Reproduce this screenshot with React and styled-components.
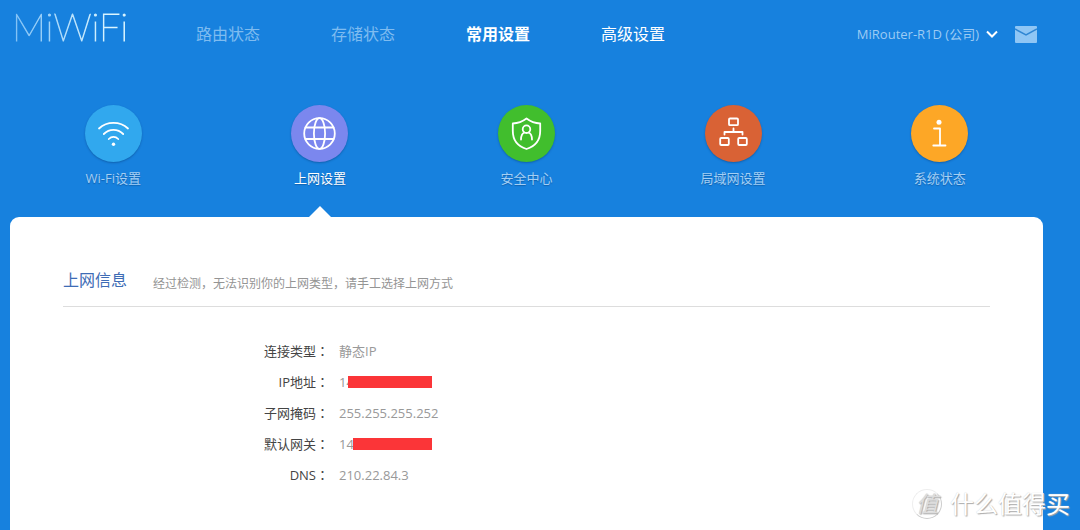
import { useState } from 'react';
import styled, { createGlobalStyle } from 'styled-components';

const GlobalStyle = createGlobalStyle`
  * {
    box-sizing: border-box;
  }
  body {
    margin: 0;
    background: #1781de;
    font-family: 'Open Sans', 'Noto Sans CJK SC', sans-serif;
    font-size: 13px;
    line-height: 20px;
  }
`;

const SPage = styled.div`
  position: relative;
  min-height: 100vh;
  display: flex;
  flex-direction: column;
  overflow: hidden;
`;

const SHeader = styled.header`
  display: flex;
  align-items: center;
  height: 68px;
  padding: 0 43px 0 12px;
`;

const SLogo = styled.a`
  width: 184px;
  padding-bottom: 16px;
  font-family: Lato, sans-serif;
  font-size: 38px;
  font-weight: 100;
  line-height: 40px;
  text-decoration: none;
  color: transparent;
  -webkit-text-stroke: 1px transparent;
  background: linear-gradient(90deg, #7fc0f5 0, #dcf6ff 100px);
  background-clip: text;
`;

const SNav = styled.nav`
  flex: 1;
  display: flex;
  gap: 71px;
`;

const NavLink = styled.a`
  font-size: 16px;
  line-height: 24px;
  text-decoration: none;
  color: ${({ $dim }) => ($dim ? '#7fbcf0' : '#ffffff')};
  font-weight: ${({ $active }) => ($active ? 700 : 400)};
`;

const RouterButton = styled.button`
  display: flex;
  align-items: center;
  gap: 7px;
  padding: 0;
  border: 0;
  background: none;
  color: #9ccbf4;
  font: inherit;
  cursor: pointer;
`;

const MailLink = styled.a`
  display: flex;
  margin-left: 17px;
`;

const STabs = styled.nav`
  display: flex;
  height: 149px;
  padding: 37px 37px 0 10px;
`;

const Tab = styled.button`
  position: relative;
  flex: 1;
  display: flex;
  flex-direction: column;
  align-items: center;
  gap: 6px;
  padding: 0;
  border: 0;
  background: none;
  font: inherit;
  color: ${({ $active }) => ($active ? '#ffffff' : '#a3cff5')};
  text-shadow: 0 1px 1px rgba(0, 40, 90, 0.35);
  cursor: pointer;
  &::after {
    content: '';
    display: ${({ $active }) => ($active ? 'block' : 'none')};
    position: absolute;
    bottom: 0;
    border: 11px solid transparent;
    border-top-width: 0;
    border-bottom-color: #ffffff;
  }
`;

const Circle = styled.span`
  display: flex;
  width: 57px;
  height: 57px;
  border-radius: 50%;
  background: ${({ $color }) => $color};
  box-shadow: 0 1px 2px rgba(0, 40, 90, 0.35);
  svg {
    width: 100%;
    height: 100%;
    fill: none;
    stroke: #ffffff;
    stroke-width: 1.8;
    stroke-linecap: round;
    stroke-linejoin: round;
  }
`;

const SPanel = styled.main`
  flex: 1;
  margin: 0 37px 0 10px;
  padding: 51px 53px 40px;
  border-radius: 9px 9px 0 0;
  background: #ffffff;
`;

const PanelHead = styled.div`
  display: flex;
  align-items: flex-end;
  gap: 26px;
  padding-bottom: 14px;
  border-bottom: 1px solid #dddddd;
  h2 {
    margin: 0;
    font-size: 16px;
    font-weight: 400;
    line-height: 24px;
    color: #3e6cb5;
  }
  p {
    margin: 0;
    font-size: 12px;
    line-height: 16px;
    color: #949494;
  }
`;

const InfoList = styled.dl`
  display: grid;
  grid-template-columns: 266px 1fr;
  column-gap: 10px;
  row-gap: 11px;
  margin: 34px 0 0;
  dt {
    text-align: right;
    color: #444444;
  }
  dd {
    display: flex;
    align-items: center;
    margin: 0;
    color: #999999;
  }
`;

const Colon = styled.span`
  font-family: 'Noto Sans CJK TC', sans-serif;
`;

const Mask = styled.span`
  width: ${({ $wide }) => ($wide ? 84 : 79)}px;
  height: 12px;
  margin-left: ${({ $wide }) => ($wide ? -6 : -1)}px;
  background: #fb3538;
`;

const SWatermark = styled.div`
  position: absolute;
  right: 10px;
  bottom: 10px;
  display: flex;
  align-items: center;
  gap: 8px;
  color: #ffffff;
  font-size: 24px;
  line-height: 32px;
  text-shadow: 1px 1px 1px #aaaaaa, 0 0 1px #cccccc;
`;

const Seal = styled.span`
  width: 30px;
  height: 30px;
  border: 1px solid #eeeeee;
  border-right-color: #cccccc;
  border-bottom-color: #cccccc;
  border-radius: 50%;
  color: #dddddd;
  font-size: 22px;
  font-style: italic;
  line-height: 26px;
  text-align: center;
`;

const navItems = [
  { name: '路由状态', dim: true },
  { name: '存储状态', dim: true },
  { name: '常用设置', active: true },
  { name: '高级设置' },
];

const tabs = [
  {
    name: 'Wi-Fi设置',
    color: '#31a8ee',
    icon: (
      <>
        <path d="M14 23.500C22 16 35 16 43 23.500M18.800 29C24.300 23.500 32.700 23.500 38.200 29M23.800 34C26.500 31.200 30.500 31.200 33.200 34" />
        <circle cx="28.500" cy="39.300" r="1.700" fill="#fff" stroke="none" />
      </>
    ),
  },
  {
    name: '上网设置',
    color: '#7b87ee',
    icon: (
      <>
        <circle cx="28.500" cy="28.500" r="15.300" />
        <ellipse cx="28.500" cy="28.500" rx="5.600" ry="15.300" />
        <path d="M14.500 22.500H42.500M14.500 34H42.500" />
      </>
    ),
  },
  {
    name: '安全中心',
    color: '#41be2d',
    icon: (
      <>
        <path d="M28.500 13.500C24.500 16.500 19.500 18.200 14.800 18.500V26C14.800 34.500 19 41 28.500 44C38 41 42.200 34.500 42.200 26V18.500C37.500 18.200 32.500 16.500 28.500 13.500Z" />
        <circle cx="28.500" cy="24.200" r="3.800" />
        <path d="M23 34.500C23 30.500 24.500 28.300 26.500 27.500M34 34.500C34 30.500 32.500 28.300 30.500 27.500" />
      </>
    ),
  },
  {
    name: '局域网设置',
    color: '#d96235',
    icon: (
      <>
        <rect x="24" y="13.500" width="9" height="6.700" rx="1" />
        <rect x="15.200" y="33" width="8.600" height="7" rx="1" />
        <rect x="33.200" y="33" width="8.600" height="7" rx="1" />
        <path d="M28.500 23.500V27M19.500 29.500V27H37.500V29.500" />
      </>
    ),
  },
  {
    name: '系统状态',
    color: '#fda726',
    icon: (
      <>
        <circle cx="28" cy="17.300" r="2.500" fill="#fff" stroke="none" />
        <path d="M23 23.500H29V40.300M22.300 40.500H34.500" />
      </>
    ),
  },
];

const infos = [
  { label: '连接类型', value: '静态IP' },
  { label: 'IP地址', value: '14', masked: true, wide: true },
  { label: '子网掩码', value: '255.255.255.252' },
  { label: '默认网关', value: '14', masked: true },
  { label: 'DNS', value: '210.22.84.3' },
];

export default function App() {
  const [current, setCurrent] = useState('上网设置');

  return (
    <SPage>
      <GlobalStyle />
      <SHeader>
        <SLogo href="#home">MiWiFi</SLogo>
        <SNav>
          {navItems.map(({ name, dim, active }) => (
            <NavLink key={name} href="#nav" $dim={dim} $active={active}>
              {name}
            </NavLink>
          ))}
        </SNav>
        <RouterButton type="button">
          MiRouter-R1D (公司)
          <svg width="12" height="8" viewBox="0 0 12 8">
            <path d="M1 1.500L6 6.500L11 1.500" fill="none" stroke="#fff" strokeWidth="2" />
          </svg>
        </RouterButton>
        <MailLink href="#mail" aria-label="mail">
          <svg width="22" height="17" viewBox="0 0 22 17">
            <rect width="22" height="17" rx="1" fill="#8fc6f5" />
            <path d="M0 3L11 9L22 3" fill="none" stroke="#2f86d3" strokeWidth="1.500" />
          </svg>
        </MailLink>
      </SHeader>
      <STabs>
        {tabs.map(({ name, color, icon }) => (
          <Tab
            key={name}
            type="button"
            $active={name === current}
            onClick={() => setCurrent(name)}
          >
            <Circle $color={color}>
              <svg viewBox="0 0 57 57">{icon}</svg>
            </Circle>
            {name}
          </Tab>
        ))}
      </STabs>
      <SPanel>
        <PanelHead>
          <h2>上网信息</h2>
          <p>经过检测，无法识别你的上网类型，请手工选择上网方式</p>
        </PanelHead>
        <InfoList>
          {infos.map(({ label, value, masked, wide }) => [
            <dt key={label}>
              {label}
              <Colon>：</Colon>
            </dt>,
            <dd key={`${label}-value`}>
              {value}
              {masked && <Mask $wide={wide} />}
            </dd>,
          ])}
        </InfoList>
      </SPanel>
      <SWatermark>
        <Seal>值</Seal>
        什么值得买
      </SWatermark>
    </SPage>
  );
}
